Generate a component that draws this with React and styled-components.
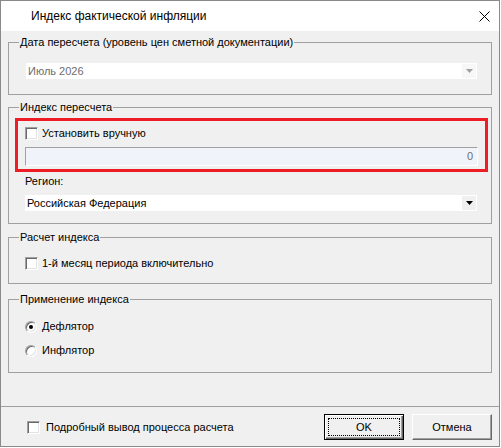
import styled, { createGlobalStyle, css } from 'styled-components';

const GlobalStyle = createGlobalStyle`
  html, body { margin: 0; padding: 0; background: #ffffff; }
  body {
    font-family: "Liberation Sans", Arial, sans-serif;
    font-size: 11px;
    color: #000;
  }
  #root { width: 501px; height: 448px; }
`;

const Window = styled.div`
  width: 500px;
  height: 447px;
  box-sizing: border-box;
  border: 1px solid #8a8a8a;
  background: #f0f0f0;
  display: flex;
  flex-direction: column;
`;

const TitleBar = styled.div`
  height: 30px;
  flex: none;
  background: #fff;
  display: flex;
  align-items: center;
  padding: 0 8px 0 30px;
  font-size: 12px;
`;

const Title = styled.div`
  flex: 1;
`;

const CloseIcon = styled.svg`
  width: 11px;
  height: 11px;
  margin-right: 1px;
`;

const Body = styled.div`
  flex: 1;
  padding: 5px 7px 0;
  display: flex;
  flex-direction: column;
`;

const Group = styled.fieldset`
  margin: ${p => p.$mt || 0}px 0 0;
  padding: ${p => p.$pt}px 0 ${p => p.$pb}px;
  border: 1px solid #a0a0a0;
  min-width: 0;
  display: flex;
  flex-direction: column;
`;

const Legend = styled.legend`
  margin-left: 10px;
  padding: 0 1px;
  line-height: 13px;
  font-size: 11px;
`;

const Highlight = styled.div`
  margin: 0 3px 0 6px;
  border: 3px solid #ee1c25;
  padding: 6px 0 3px 7px;
  display: flex;
  flex-direction: column;
  gap: 7px;
`;

const Row = styled.label`
  display: flex;
  align-items: center;
  gap: ${p => p.$gap || 4}px;
  margin-left: ${p => p.$ml || 0}px;
  margin-top: ${p => p.$mt || 0}px;
  height: 13px;
  line-height: 13px;
  flex: ${p => (p.$grow ? 1 : 'none')};
`;

const Check = styled.span`
  width: 13px;
  height: 13px;
  box-sizing: border-box;
  flex: none;
  background: #fff;
  border: 1px solid;
  border-color: #a0a0a0 #ffffff #ffffff #a0a0a0;
  box-shadow: inset 1px 1px #696969, inset -1px -1px #e3e3e3;
`;

const Radio = styled.span`
  width: 12px;
  height: 12px;
  box-sizing: border-box;
  flex: none;
  border-radius: 50%;
  background: #fff;
  border: 1px solid;
  border-color: #a0a0a0 #ffffff #ffffff #a0a0a0;
  box-shadow: inset 1px 1px #696969, inset -1px -1px #e3e3e3;
  display: flex;
  align-items: center;
  justify-content: center;
  ${p => p.$checked && css`
    &::after {
      content: "";
      width: 4px;
      height: 4px;
      border-radius: 50%;
      background: #000;
    }
  `}
`;

const Field = styled.div`
  width: 453px;
  height: 19px;
  box-sizing: border-box;
  background: #f0f4fa;
  border-top: 1px solid #a0a0a0;
  border-left: 1px solid #a0a0a0;
  border-right: 1px solid #ffffff;
  border-bottom: 1px solid #ffffff;
  color: #6d6d6d;
  text-align: right;
  padding-right: 4px;
  line-height: 17px;
`;

const Caption = styled.div`
  margin: 3px 0 0 16px;
  line-height: 13px;
`;

const Combo = styled.div`
  margin: ${p => p.$mt || 0}px 0 0 ${p => p.$ml}px;
  width: ${p => p.$w}px;
  height: 16px;
  background: #fff;
  display: flex;
  align-items: center;
  color: ${p => (p.$disabled ? '#6d6d6d' : '#000')};
`;

const ComboText = styled.span`
  flex: 1;
  padding-left: 2px;
  line-height: 16px;
`;

const ComboArrow = styled.span`
  width: 14px;
  align-self: stretch;
  margin: 1px 1px 1px 0;
  background: ${p => (p.$disabled ? '#f7f7f7' : '#f0f0f0')};
  display: flex;
  align-items: center;
  justify-content: center;
`;

const Spacer = styled.div`
  flex: 1;
`;

const Footer = styled.div`
  flex: none;
  border-top: 1px solid #a0a0a0;
  padding: 7px 7px 6px 26px;
  display: flex;
  align-items: center;
  gap: 8px;
`;

const Button = styled.button`
  width: 80px;
  height: 26px;
  box-sizing: border-box;
  padding: 3px;
  font: inherit;
  font-size: 11px;
  color: #000;
  background: #f0f0f0;
  border: 1px solid;
  border-color: #ffffff #696969 #696969 #ffffff;
  box-shadow: inset -1px -1px #a0a0a0;
  display: flex;
  ${p => p.$default && css`
    border: 1px solid #000;
    box-shadow: inset 1px 1px #fff, inset -1px -1px #696969, inset -2px -2px #a0a0a0;
  `}
`;

const ButtonFace = styled.span`
  flex: 1;
  display: flex;
  align-items: center;
  justify-content: center;
  border: 1px dotted ${p => (p.$focus ? '#000' : 'transparent')};
`;

function Arrow({ color }) {
  return (
    <svg width="7" height="4" viewBox="0 0 7 4">
      <polygon points="0,0 7,0 3.5,4" fill={color} />
    </svg>
  );
}

function Dropdown({ text, disabled, ml, mt, w }) {
  return (
    <Combo $disabled={disabled} $ml={ml} $mt={mt} $w={w}>
      <ComboText>{text}</ComboText>
      <ComboArrow $disabled={disabled}>
        <Arrow color={disabled ? '#a0a0a0' : '#000'} />
      </ComboArrow>
    </Combo>
  );
}

export default function App() {
  return (
    <>
      <GlobalStyle />
      <Window>
        <TitleBar>
          <Title>Индекс фактической инфляции</Title>
          <CloseIcon viewBox="0 0 11 11">
            <path d="M0.5 0.5 L10.5 10.5 M10.5 0.5 L0.5 10.5" stroke="#000" strokeWidth="1" />
          </CloseIcon>
        </TitleBar>
        <Body>
          <Group $pt={14} $pb={15}>
            <Legend>Дата пересчета (уровень цен сметной документации)</Legend>
            <Dropdown text="Июль 2026" disabled ml={17} w={451} />
          </Group>

          <Group $mt={6} $pt={4} $pb={12}>
            <Legend>Индекс пересчета</Legend>
            <Highlight>
              <Row>
                <Check />
                <span>Установить вручную</span>
              </Row>
              <Field>0</Field>
            </Highlight>
            <Caption>Регион:</Caption>
            <Dropdown text="Российская Федерация" ml={16} mt={7} w={452} />
          </Group>

          <Group $mt={7} $pt={13} $pb={13}>
            <Legend>Расчет индекса</Legend>
            <Row $ml={16}>
              <Check />
              <span>1-й месяц периода включительно</span>
            </Row>
          </Group>

          <Group $mt={9} $pt={14} $pb={15}>
            <Legend>Применение индекса</Legend>
            <Row $ml={16} $gap={5}>
              <Radio $checked />
              <span>Дефлятор</span>
            </Row>
            <Row $ml={16} $mt={11} $gap={5}>
              <Radio />
              <span>Инфлятор</span>
            </Row>
          </Group>
          <Spacer />
        </Body>
        <Footer>
          <Row $gap={6} $grow>
            <Check />
            <span>Подробный вывод процесса расчета</span>
          </Row>
          <Button $default>
            <ButtonFace $focus>OK</ButtonFace>
          </Button>
          <Button>
            <ButtonFace>Отмена</ButtonFace>
          </Button>
        </Footer>
      </Window>
    </>
  );
}
